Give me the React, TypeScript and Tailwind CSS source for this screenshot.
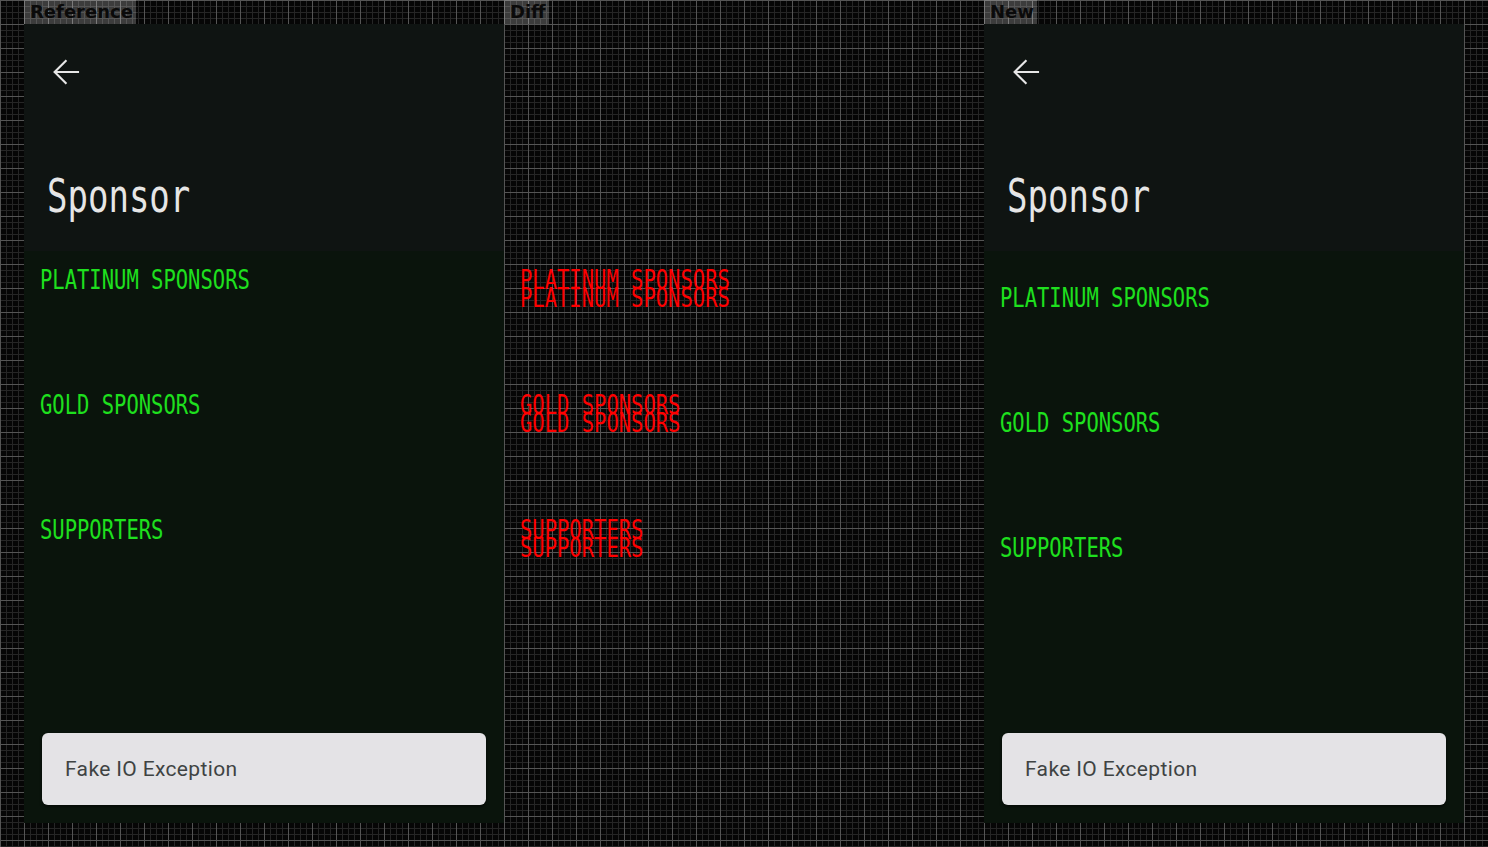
import React from "react";

const ITEMS = ["PLATINUM SPONSORS", "GOLD SPONSORS", "SUPPORTERS"];

function Sections({ pad, color }: { pad: string; color: string }) {
  return (
    <div className={`flex flex-col pl-[16px] ${pad}`}>
      {ITEMS.map((t) => (
        <div key={t} className="h-[125px]">
          <div
            className={`font-['DejaVu_Sans_Mono',monospace] text-[20.5px] leading-none whitespace-pre origin-top scale-y-[1.3] ${color}`}
          >
            {t}
          </div>
        </div>
      ))}
    </div>
  );
}

function Label({ text }: { text: string }) {
  return (
    <div className="h-[24px] flex">
      <span className="h-[24px] pl-[6px] pr-[3px] bg-[rgba(255,255,255,0.22)] font-['DejaVu_Sans',sans-serif] font-bold text-[18px] leading-[24px] text-[#0a0a0a]">
        {text}
      </span>
    </div>
  );
}

function Phone({ pad }: { pad: string }) {
  return (
    <div className="h-[799px] flex flex-col">
      <div className="h-[227px] bg-[#0f1412] pt-[30px] pl-[24px] flex flex-col items-start">
        <svg width="36" height="36" viewBox="0 0 24 24" fill="none">
          <path
            d="M20 12H4.6M11.8 4.6L4.4 12l7.4 7.4"
            stroke="#e6e6e6"
            strokeWidth="1.4"
            strokeLinecap="square"
          />
        </svg>
        <div className="mt-[82px] -ml-[1px] font-['DejaVu_Sans_Mono',monospace] text-[34px] leading-none text-[#e6e6e6] origin-top scale-y-[1.37]">
          Sponsor
        </div>
      </div>
      <div className="flex-1 bg-[#0a140c] flex flex-col">
        <Sections pad={pad} color="text-[#1ee01e]" />
        <div className="flex-1" />
        <div className="mx-[18px] mb-[18px] h-[72px] rounded-[6px] bg-[#e4e3e6] shadow-[0_2px_3px_rgba(0,0,0,0.5)] flex items-center pl-[23px] pt-[1px]">
          <span className="font-['Roboto',sans-serif] text-[21px] tracking-[0.35px] text-[#3f4343]">
            Fake IO Exception
          </span>
        </div>
      </div>
    </div>
  );
}

export default function App() {
  return (
    <div className="w-[1488px] h-[847px] overflow-hidden bg-[#060606] bg-[image:linear-gradient(to_right,#555555_1px,transparent_1px),linear-gradient(to_bottom,#555555_1px,transparent_1px),linear-gradient(to_right,#262626_1px,transparent_1px),linear-gradient(to_bottom,#262626_1px,transparent_1px)] bg-[size:24px_24px,24px_24px,6px_6px,6px_6px]">
      <div className="flex pl-[24px]">
        <div className="w-[480px] flex flex-col">
          <Label text="Reference" />
          <Phone pad="pt-[16px]" />
        </div>
        <div className="w-[480px] flex flex-col">
          <Label text="Diff" />
          <div className="h-[799px] flex flex-col">
            <div className="h-[227px]" />
            <div className="grid">
              <div className="col-start-1 row-start-1">
                <Sections pad="pt-[16px]" color="text-[#ff0000]" />
              </div>
              <div className="col-start-1 row-start-1">
                <Sections pad="pt-[34px]" color="text-[#ff0000]" />
              </div>
            </div>
          </div>
        </div>
        <div className="w-[480px] flex flex-col">
          <Label text="New" />
          <Phone pad="pt-[34px]" />
        </div>
      </div>
    </div>
  );
}
